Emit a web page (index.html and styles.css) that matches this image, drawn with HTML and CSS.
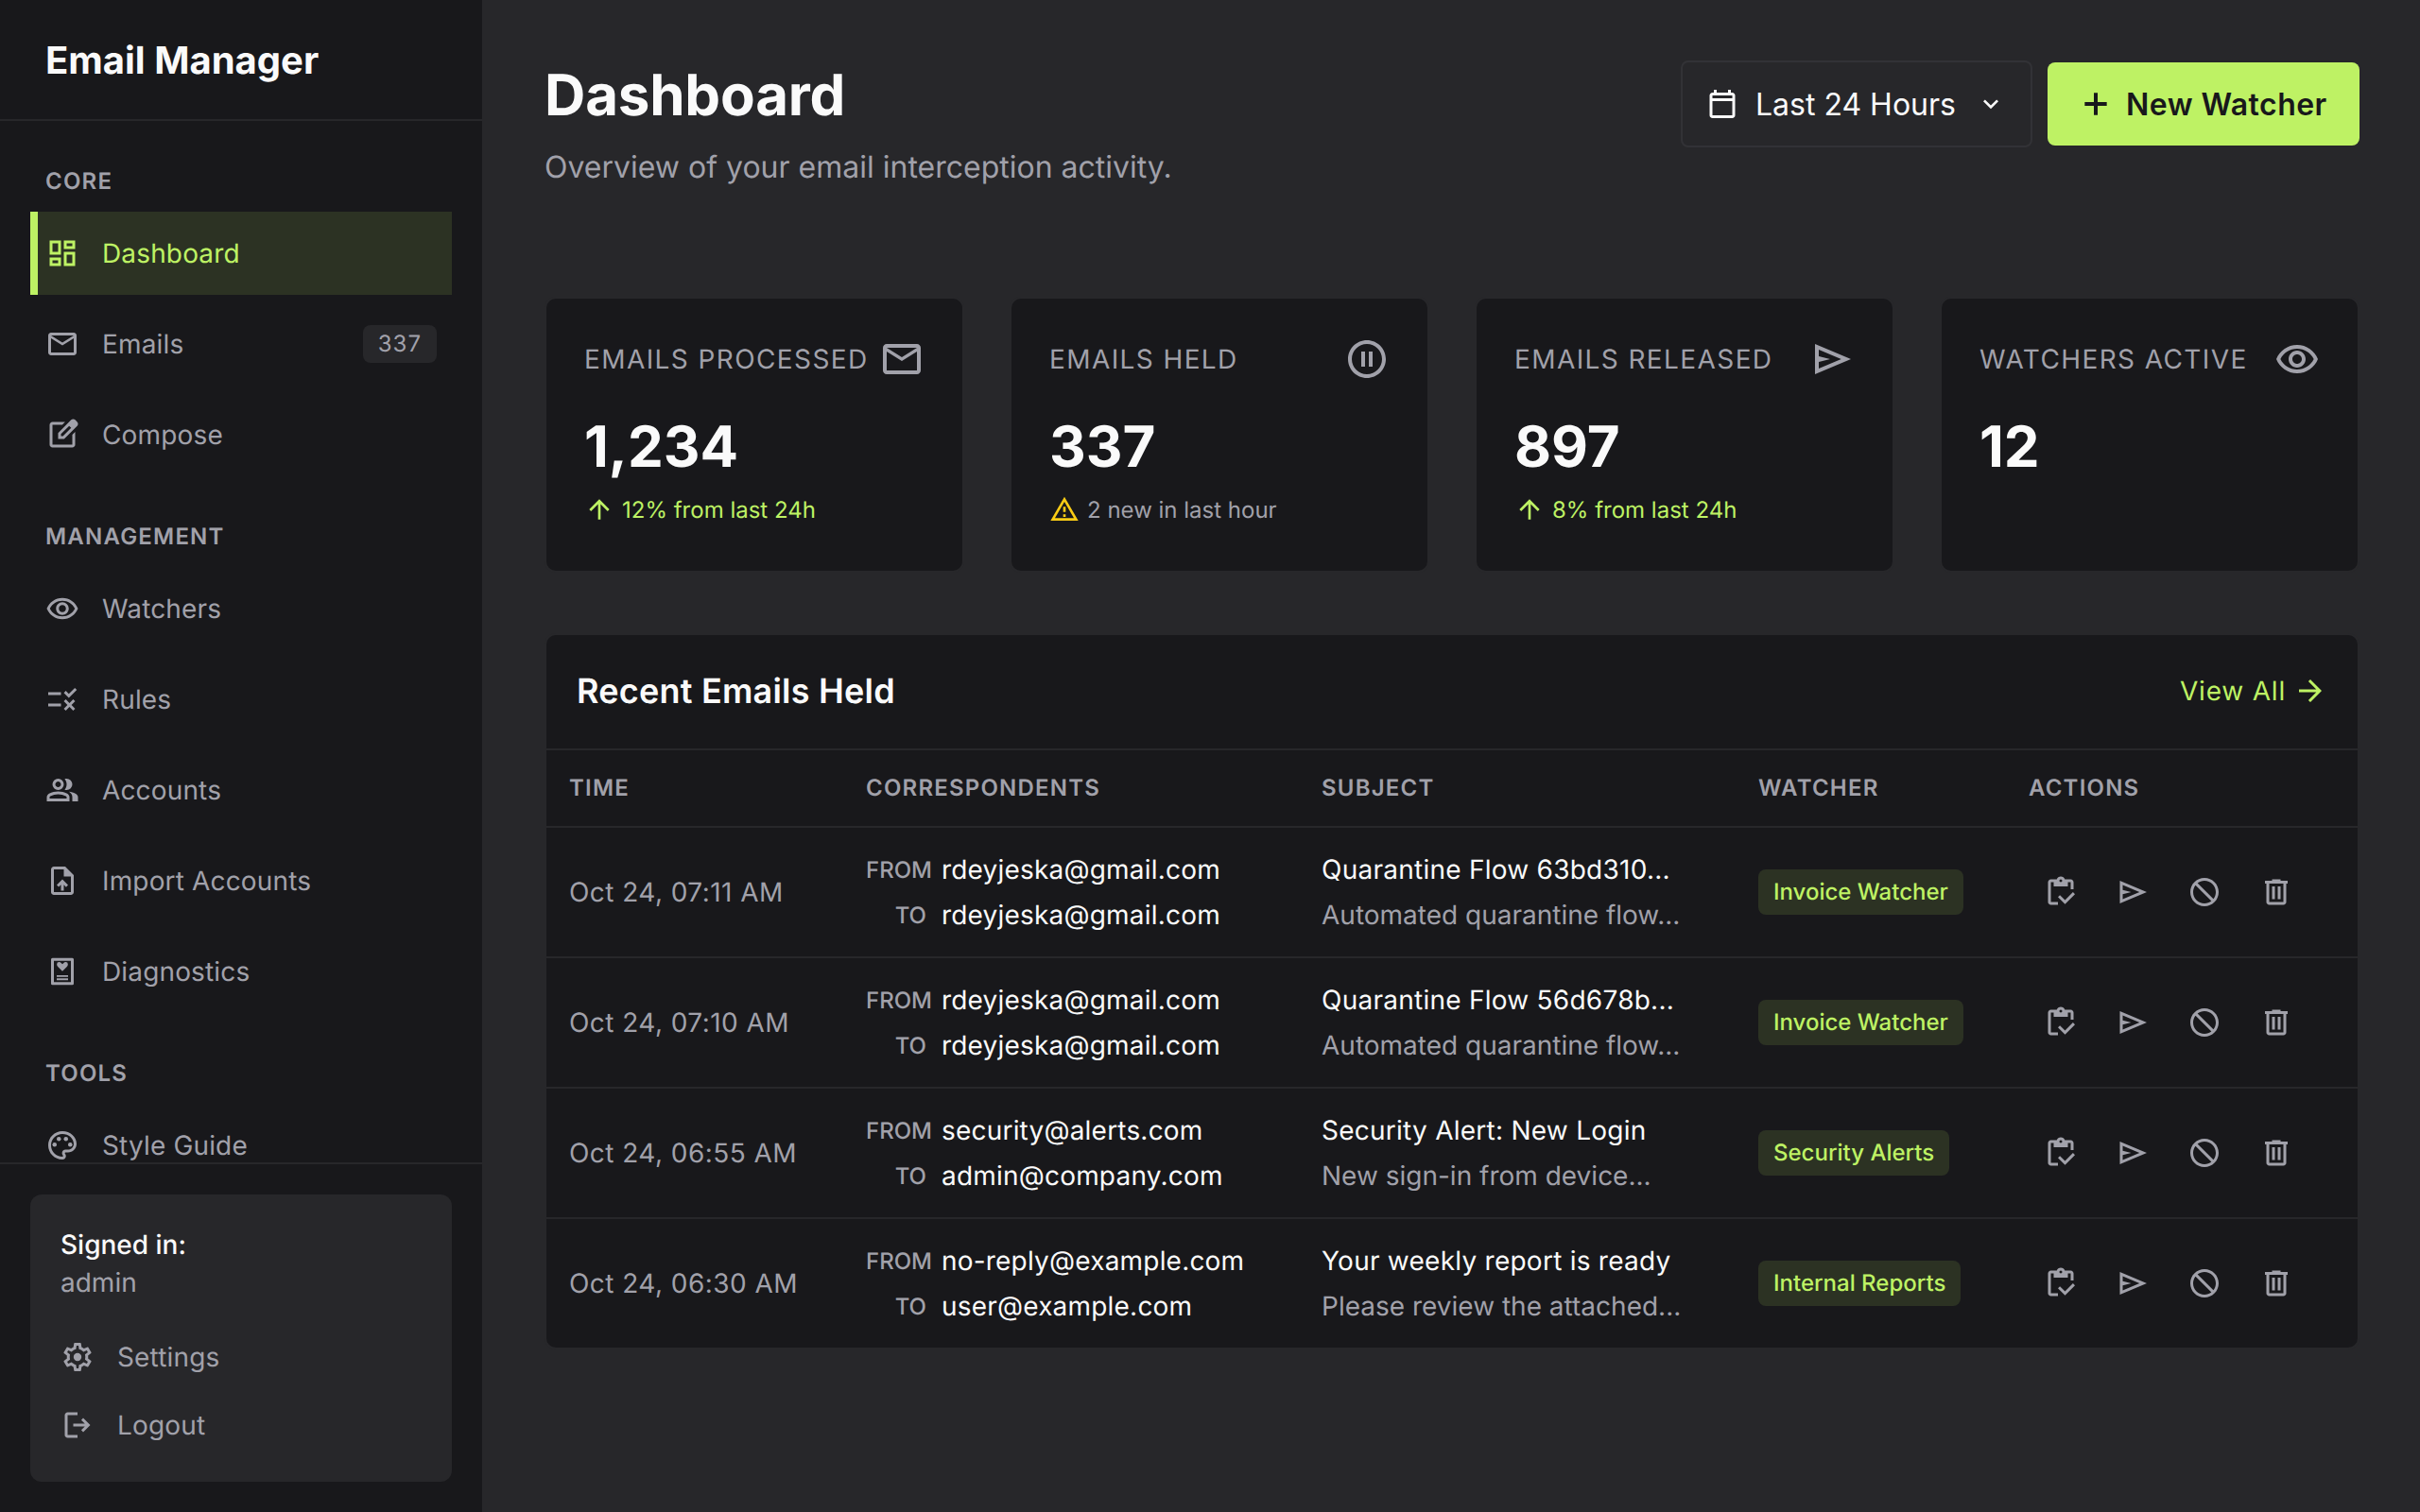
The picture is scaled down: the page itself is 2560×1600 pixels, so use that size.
FILE: index.html
```html
<!DOCTYPE html>
<html lang="en">
<head>
    <meta charset="UTF-8">
    <meta name="viewport" content="width=device-width, initial-scale=1.0">
    <link rel="stylesheet" href="styles.css">
    <title>Email Manager</title>
</head>
<body>
    <div class="app">
        <aside class="sidebar">
            <div class="brand">Email Manager</div>
            <nav class="nav">
                <div class="nav-label">CORE</div>
                <a class="nav-item active">
                    <svg class="icon" viewBox="0 0 24 24"><path d="M19 5v2h-4V5h4M9 5v6H5V5h4m10 8v6h-4v-6h4M9 17v2H5v-2h4M21 3h-8v6h8V3zM11 3H3v10h8V3zm10 8h-8v10h8V11zm-10 4H3v6h8v-6z"/></svg>
                    <span>Dashboard</span>
                </a>
                <a class="nav-item">
                    <svg class="icon" viewBox="0 0 24 24"><path d="M20 4H4c-1.1 0-1.99.9-1.99 2L2 18c0 1.1.9 2 2 2h16c1.1 0 2-.9 2-2V6c0-1.1-.9-2-2-2zm0 14H4V8l8 5 8-5v10zm-8-7L4 6h16l-8 5z"/></svg>
                    <span>Emails</span>
                    <span class="nav-badge">337</span>
                </a>
                <a class="nav-item">
                    <svg class="icon" viewBox="0 0 24 24"><path fill-rule="evenodd" d="M5 21q-.825 0-1.412-.587Q3 19.825 3 19V5q0-.825.588-1.413Q4.175 3 5 3h8.925l-2 2H5v14h14v-6.95l2-2V19q0 .825-.587 1.413Q19.825 21 19 21Zm4-6v-4.25l9.175-9.175q.3-.3.675-.45.375-.15.75-.15.4 0 .763.15.362.15.662.425L22.425 3q.275.3.425.662.15.363.15.738t-.137.737q-.138.363-.438.663L13.25 15Zm2-2h1.4l5.8-5.8-.7-.7-.725-.7L11 11.575Z"/></svg>
                    <span>Compose</span>
                </a>

                <div class="nav-label">MANAGEMENT</div>
                <a class="nav-item">
                    <svg class="icon" viewBox="0 0 24 24"><path d="M12 6.5c3.79 0 7.17 2.13 8.82 5.5-1.65 3.37-5.02 5.5-8.82 5.5S4.83 15.37 3.18 12C4.83 8.63 8.21 6.5 12 6.5m0-2C7 4.5 2.73 7.61 1 12c1.73 4.39 6 7.5 11 7.5s9.27-3.11 11-7.5c-1.73-4.39-6-7.5-11-7.5zm0 5c1.38 0 2.5 1.12 2.5 2.5s-1.12 2.5-2.5 2.5-2.5-1.12-2.5-2.5 1.12-2.5 2.5-2.5m0-2c-2.48 0-4.5 2.02-4.5 4.5s2.02 4.5 4.5 4.5 4.5-2.02 4.5-4.5-2.02-4.5-4.5-4.5z"/></svg>
                    <span>Watchers</span>
                </a>
                <a class="nav-item">
                    <svg class="icon" viewBox="0 0 24 24"><path d="M16.54 11L13 7.46l1.41-1.41 2.12 2.12 4.24-4.24 1.41 1.41L16.54 11zM11 7H2v2h9V7zm10 6.41L19.59 12 17 14.59 14.41 12 13 13.41 15.59 16 13 18.59 14.41 20 17 17.41 19.59 20 21 18.59 18.41 16 21 13.41zM11 15H2v2h9v-2z"/></svg>
                    <span>Rules</span>
                </a>
                <a class="nav-item">
                    <svg class="icon" viewBox="0 0 24 24"><path fill-rule="evenodd" d="M1 20v-2.8q0-.85.438-1.563.437-.712 1.162-1.087 1.55-.775 3.15-1.163Q7.35 13 9 13t3.25.387q1.6.388 3.15 1.163.725.375 1.162 1.087Q17 16.35 17 17.2V20Zm18 0v-3q0-1.1-.612-2.113-.613-1.012-1.738-1.737 1.275.15 2.4.512 1.125.363 2.1.888.9.5 1.375 1.112Q23 16.275 23 17v3ZM9 12q-1.65 0-2.825-1.175Q5 9.65 5 8q0-1.65 1.175-2.825Q7.35 4 9 4q1.65 0 2.825 1.175Q13 6.35 13 8q0 1.65-1.175 2.825Q10.65 12 9 12Zm10-4q0 1.65-1.175 2.825Q16.65 12 15 12q-.275 0-.7-.062-.425-.063-.7-.138.675-.8 1.037-1.775Q15 9.05 15 8q0-1.05-.363-2.025Q14.275 5 13.6 4.2q.35-.125.7-.162Q14.65 4 15 4q1.65 0 2.825 1.175Q19 6.35 19 8ZM3 18h12v-.8q0-.275-.137-.5-.138-.225-.363-.35-1.35-.675-2.725-1.012Q10.4 15 9 15t-2.775.338Q4.85 15.675 3.5 16.35q-.225.125-.362.35Q3 16.925 3 17.2Zm6-8q.825 0 1.413-.588Q11 8.825 11 8t-.587-1.412Q9.825 6 9 6q-.825 0-1.412.588Q7 7.175 7 8t.588 1.412Q8.175 10 9 10Z"/></svg>
                    <span>Accounts</span>
                </a>
                <a class="nav-item">
                    <svg class="icon" viewBox="0 0 24 24"><path fill-rule="evenodd" d="M6 22q-.825 0-1.412-.587Q4 20.825 4 20V4q0-.825.588-1.413Q5.175 2 6 2h8l6 6v12q0 .825-.587 1.413Q18.825 22 18 22Zm7-13V4H6v16h12V9ZM11 19h2v-4.175l1.6 1.6L16 15l-4-4-4 4 1.425 1.4L11 14.825Z"/></svg>
                    <span>Import Accounts</span>
                </a>
                <a class="nav-item">
                    <svg class="icon" viewBox="0 0 24 24"><path fill-rule="evenodd" d="M5 2.5h14q1 0 1 1v17q0 1-1 1H5q-1 0-1-1v-17q0-1 1-1Zm1 2v15h12v-15Z"/><path d="M12 11.8l-3-2.9q-.9-.9-.9-1.9 0-1.6 1.6-1.6.9 0 1.4.6l.9.8.9-.8q.5-.6 1.4-.6 1.6 0 1.6 1.6 0 1-.9 1.9ZM8 14.6h8v1.3H8Zm0 2.2h8v1.3H8Z"/></svg>
                    <span>Diagnostics</span>
                </a>

                <div class="nav-label">TOOLS</div>
                <a class="nav-item">
                    <svg class="icon" viewBox="0 0 24 24"><path d="M12 22C6.49 22 2 17.51 2 12S6.49 2 12 2s10 4.04 10 9c0 3.31-2.69 6-6 6h-1.77c-.28 0-.5.22-.5.5 0 .12.05.23.13.33.41.47.64 1.06.64 1.67 0 1.38-1.12 2.5-2.5 2.5zm0-18c-4.41 0-8 3.59-8 8s3.59 8 8 8c.28 0 .5-.22.5-.5 0-.16-.08-.28-.14-.35-.41-.46-.63-1.05-.63-1.65 0-1.38 1.12-2.5 2.5-2.5H16c2.21 0 4-1.79 4-4 0-3.86-3.59-7-8-7z"/><circle cx="6.5" cy="11.5" r="1.5"/><circle cx="9.5" cy="7.5" r="1.5"/><circle cx="14.5" cy="7.5" r="1.5"/><circle cx="17.5" cy="11.5" r="1.5"/></svg>
                    <span>Style Guide</span>
                </a>
            </nav>
            <div class="sidebar-footer">
                <div class="user-card">
                    <div class="user-title">Signed in:</div>
                    <div class="user-name">admin</div>
                    <div class="user-links">
                        <a class="user-link">
                            <svg class="icon" viewBox="0 0 24 24"><path d="M19.43 12.98c.04-.32.07-.64.07-.98 0-.34-.03-.66-.07-.98l2.11-1.65c.19-.15.24-.42.12-.64l-2-3.46c-.09-.16-.26-.25-.44-.25-.06 0-.12.01-.17.03l-2.49 1c-.52-.4-1.08-.73-1.69-.98l-.38-2.65C14.46 2.18 14.25 2 14 2h-4c-.25 0-.46.18-.49.42l-.38 2.65c-.61.25-1.17.59-1.69.98l-2.49-1c-.06-.02-.12-.03-.18-.03-.17 0-.34.09-.43.25l-2 3.46c-.13.22-.07.49.12.64l2.11 1.65c-.04.32-.07.65-.07.98 0 .33.03.66.07.98l-2.11 1.65c-.19.15-.24.42-.12.64l2 3.46c.09.16.26.25.44.25.06 0 .12-.01.17-.03l2.49-1c.52.4 1.08.73 1.69.98l.38 2.65c.03.24.24.42.49.42h4c.25 0 .46-.18.49-.42l.38-2.65c.61-.25 1.17-.59 1.69-.98l2.49 1c.06.02.12.03.18.03.17 0 .34-.09.43-.25l2-3.46c.12-.22.07-.49-.12-.64l-2.11-1.65zm-1.98-1.71c.04.31.05.52.05.73 0 .21-.02.43-.05.73l-.14 1.13.89.7 1.08.84-.7 1.21-1.27-.51-1.04-.42-.9.68c-.43.32-.84.56-1.25.73l-1.06.43-.16 1.13-.2 1.35h-1.4l-.19-1.35-.16-1.13-1.06-.43c-.43-.18-.83-.41-1.23-.71l-.91-.7-1.06.43-1.27.51-.7-1.21 1.08-.84.89-.7-.14-1.13c-.03-.31-.05-.54-.05-.74s.02-.43.05-.73l.14-1.13-.89-.7-1.08-.84.7-1.21 1.27.51 1.04.42.9-.68c.43-.32.84-.56 1.25-.73l1.06-.43.16-1.13.2-1.35h1.39l.19 1.35.16 1.13 1.06.43c.43.18.83.41 1.23.71l.91.7 1.06-.43 1.27-.51.7 1.21-1.07.85-.89.7.14 1.13z"/><circle cx="12" cy="12" r="2.8"/></svg>
                            <span>Settings</span>
                        </a>
                        <a class="user-link">
                            <svg class="icon" viewBox="0 0 24 24"><path d="M5 21c-.55 0-1.02-.2-1.41-.59C3.2 20.02 3 19.55 3 19V5c0-.55.2-1.02.59-1.41C3.98 3.2 4.45 3 5 3h7v2H5v14h7v2H5Zm11-4-1.375-1.45 2.55-2.55H9v-2h8.175l-2.55-2.55L16 7l5 5-5 5Z"/></svg>
                            <span>Logout</span>
                        </a>
                    </div>
                </div>
            </div>
        </aside>

        <main class="main">
            <header class="page-head">
                <div>
                    <h1 class="page-title">Dashboard</h1>
                    <p class="page-sub">Overview of your email interception activity.</p>
                </div>
                <div class="head-actions">
                    <button class="range-select">
                        <svg class="icon" viewBox="0 0 24 24"><path fill-rule="evenodd" d="M5 22q-.825 0-1.412-.587Q3 20.825 3 20V6q0-.825.588-1.412Q4.175 4 5 4h1V2h2v2h8V2h2v2h1q.825 0 1.413.588Q21 5.175 21 6v14q0 .825-.587 1.413Q19.825 22 19 22Zm0-2h14V10H5Zm0-12h14V6H5Z"/></svg>
                        <span>Last 24 Hours</span>
                        <svg class="icon chevron" viewBox="0 0 24 24"><path d="M16.59 8.59 12 13.17 7.41 8.59 6 10l6 6 6-6z"/></svg>
                    </button>
                    <button class="primary-btn">
                        <svg class="icon" viewBox="0 0 24 24"><path d="M19 13.2h-5.8V19h-2.4v-5.8H5v-2.4h5.8V5h2.4v5.8H19z"/></svg>
                        <span>New Watcher</span>
                    </button>
                </div>
            </header>

            <section class="stats">
                <div class="stat-card">
                    <div class="stat-head">
                        <span class="stat-label">EMAILS PROCESSED</span>
                        <svg class="icon" viewBox="0 0 24 24"><path d="M20 4H4c-1.1 0-1.99.9-1.99 2L2 18c0 1.1.9 2 2 2h16c1.1 0 2-.9 2-2V6c0-1.1-.9-2-2-2zm0 14H4V8l8 5 8-5v10zm-8-7L4 6h16l-8 5z"/></svg>
                    </div>
                    <div class="stat-value">1,234</div>
                    <div class="stat-note up">
                        <svg class="icon" viewBox="0 0 24 24"><path d="M4 12l1.41 1.41L11 7.83V20h2V7.83l5.58 5.59L20 12l-8-8-8 8z"/></svg>
                        <span>12% from last 24h</span>
                    </div>
                </div>
                <div class="stat-card">
                    <div class="stat-head">
                        <span class="stat-label">EMAILS HELD</span>
                        <svg class="icon" viewBox="0 0 24 24"><path d="M9 16h2V8H9v8zm3-14C6.48 2 2 6.48 2 12s4.48 10 10 10 10-4.48 10-10S17.52 2 12 2zm0 18c-4.41 0-8-3.59-8-8s3.59-8 8-8 8 3.59 8 8-3.59 8-8 8zm1-4h2V8h-2v8z"/></svg>
                    </div>
                    <div class="stat-value">337</div>
                    <div class="stat-note">
                        <svg class="icon warn" viewBox="0 0 24 24"><path d="M12 5.99 19.53 19H4.47L12 5.99M12 2 1 21h22L12 2zm1 14h-2v2h2v-2zm0-6h-2v4h2v-4z"/></svg>
                        <span>2 new in last hour</span>
                    </div>
                </div>
                <div class="stat-card">
                    <div class="stat-head">
                        <span class="stat-label">EMAILS RELEASED</span>
                        <svg class="icon" viewBox="0 0 24 24"><path fill-rule="evenodd" d="M3 20V4l19 8Zm2-3 11.85-5L5 7v3.5l6 1.5-6 1.5Z"/></svg>
                    </div>
                    <div class="stat-value">897</div>
                    <div class="stat-note up">
                        <svg class="icon" viewBox="0 0 24 24"><path d="M4 12l1.41 1.41L11 7.83V20h2V7.83l5.58 5.59L20 12l-8-8-8 8z"/></svg>
                        <span>8% from last 24h</span>
                    </div>
                </div>
                <div class="stat-card">
                    <div class="stat-head">
                        <span class="stat-label">WATCHERS ACTIVE</span>
                        <svg class="icon" viewBox="0 0 24 24"><path d="M12 6.5c3.79 0 7.17 2.13 8.82 5.5-1.65 3.37-5.02 5.5-8.82 5.5S4.83 15.37 3.18 12C4.83 8.63 8.21 6.5 12 6.5m0-2C7 4.5 2.73 7.61 1 12c1.73 4.39 6 7.5 11 7.5s9.27-3.11 11-7.5c-1.73-4.39-6-7.5-11-7.5zm0 5c1.38 0 2.5 1.12 2.5 2.5s-1.12 2.5-2.5 2.5-2.5-1.12-2.5-2.5 1.12-2.5 2.5-2.5m0-2c-2.48 0-4.5 2.02-4.5 4.5s2.02 4.5 4.5 4.5 4.5-2.02 4.5-4.5-2.02-4.5-4.5-4.5z"/></svg>
                    </div>
                    <div class="stat-value">12</div>
                </div>
            </section>

            <section class="panel">
                <div class="panel-head">
                    <h2 class="panel-title">Recent Emails Held</h2>
                    <a class="view-all">
                        <span>View All</span>
                        <svg class="icon" viewBox="0 0 24 24"><path d="M12 4l-1.41 1.41L16.17 11H4v2h12.17l-5.58 5.59L12 20l8-8z"/></svg>
                    </a>
                </div>
                <table class="held-table">
                    <colgroup>
                        <col class="col-time">
                        <col class="col-corr">
                        <col class="col-subject">
                        <col class="col-watcher">
                        <col class="col-actions">
                    </colgroup>
                    <thead>
                        <tr>
                            <th>TIME</th>
                            <th>CORRESPONDENTS</th>
                            <th>SUBJECT</th>
                            <th>WATCHER</th>
                            <th>ACTIONS</th>
                        </tr>
                    </thead>
                    <tbody id="rows"></tbody>
                </table>
            </section>
        </main>
    </div>

    <template id="row-actions">
        <div class="row-actions">
            <button class="icon-btn"><svg class="icon" viewBox="0 0 24 24"><path fill-rule="evenodd" d="M5 21q-.825 0-1.412-.587Q3 19.825 3 19V5q0-.825.588-1.413Q4.175 3 5 3h4.175q.275-.875 1.075-1.438Q11.05 1 12 1q1 0 1.788.562.787.563 1.062 1.438H19q.825 0 1.413.587Q21 4.175 21 5v5h-2V5h-2v3H7V5H5v14h5v2Zm10-.5-5-5 1.4-1.4 3.6 3.55 5.6-5.6 1.4 1.45ZM12 5q.425 0 .713-.288Q13 4.425 13 4t-.287-.713Q12.425 3 12 3t-.712.287Q11 3.575 11 4t.288.712Q11.575 5 12 5Z"/></svg></button>
            <button class="icon-btn"><svg class="icon" viewBox="0 0 24 24"><path fill-rule="evenodd" d="M3 20V4l19 8Zm2-3 11.85-5L5 7v3.5l6 1.5-6 1.5Z"/></svg></button>
            <button class="icon-btn"><svg class="icon" viewBox="0 0 24 24"><path d="M12 2C6.48 2 2 6.48 2 12s4.48 10 10 10 10-4.48 10-10S17.52 2 12 2zm0 18c-4.42 0-8-3.58-8-8 0-1.85.63-3.55 1.69-4.9L16.9 18.31C15.55 19.37 13.85 20 12 20zm6.31-3.1L7.1 5.69C8.45 4.63 10.15 4 12 4c4.42 0 8 3.58 8 8 0 1.85-.63 3.55-1.69 4.9z"/></svg></button>
            <button class="icon-btn"><svg class="icon" viewBox="0 0 24 24"><path fill-rule="evenodd" d="M7 21q-.825 0-1.412-.587Q5 19.825 5 19V6H4V4h5V3h6v1h5v2h-1v13q0 .825-.587 1.413Q17.825 21 17 21ZM17 6H7v13h10ZM9 17h2V8H9Zm4 0h2V8h-2Z"/></svg></button>
        </div>
    </template>

    <script src="rows.js"></script>
</body>
</html>
```

FILE: styles.css
```css
* {
    box-sizing: border-box;
}

body {
    margin: 0;
    background-color: #27272a;
    color: #fafafa;
    font-family: Inter, "Noto Sans", sans-serif;
    font-size: 28px;
    text-rendering: geometricPrecision;
}

h1, h2, p {
    margin: 0;
}

button {
    font-family: inherit;
    cursor: pointer;
}

.icon {
    display: block;
    flex: none;
    width: 36px;
    height: 36px;
    fill: currentColor;
}

.app {
    display: flex;
    height: 1600px;
    overflow: hidden;
}

/* sidebar */
.sidebar {
    display: flex;
    flex-direction: column;
    flex: none;
    width: 512px;
    height: 1600px;
    background-color: #18181b;
    border-right: 2px solid #27272a;
}

.brand {
    flex: none;
    height: 128px;
    padding: 0 48px;
    border-bottom: 2px solid #27272a;
    font-size: 40px;
    font-weight: 700;
    line-height: 128px;
}

.nav {
    flex: 1;
    min-height: 0;
    overflow: hidden;
    padding: 48px 32px 0;
}

.nav-label {
    height: 32px;
    margin: 0 0 16px 16px;
    color: #a1a1aa;
    font-size: 24px;
    font-weight: 600;
    letter-spacing: 1.2px;
    line-height: 32px;
}

.nav-item + .nav-label {
    margin-top: 48px;
}

.nav-item {
    display: flex;
    align-items: center;
    gap: 24px;
    height: 88px;
    margin-bottom: 8px;
    padding: 0 16px;
    color: #a1a1aa;
    letter-spacing: 0.15px;
}

.nav-item.active {
    padding-left: 8px;
    border-left: 8px solid #bef264;
    background-color: rgba(190, 242, 100, 0.12);
    color: #bef264;
}

.nav-badge {
    margin-left: auto;
    padding: 4px 16px;
    border-radius: 8px;
    background-color: #27272a;
    font-size: 24px;
    letter-spacing: 1px;
    line-height: 32px;
}

.sidebar-footer {
    flex: none;
    height: 370px;
    padding: 32px;
    border-top: 2px solid #27272a;
}

.user-card {
    height: 304px;
    padding: 32px;
    border-radius: 12px;
    background-color: #27272a;
}

.user-title {
    font-weight: 500;
    line-height: 42px;
}

.user-name {
    color: #a1a1aa;
    line-height: 38px;
}

.user-links {
    margin-top: 24px;
}

.user-link {
    display: flex;
    align-items: center;
    gap: 24px;
    height: 72px;
    color: #a1a1aa;
    letter-spacing: 0.15px;
}

/* main */
.main {
    flex: 1;
    min-width: 0;
    padding: 64px;
}

.page-head {
    display: flex;
    justify-content: space-between;
    height: 250px;
}

.page-title {
    margin-top: 1px;
    font-size: 60px;
    font-weight: 700;
    letter-spacing: -0.2px;
    line-height: 72px;
}

.page-sub {
    margin-top: 16px;
    color: #a1a1aa;
    font-size: 32px;
    line-height: 48px;
}

.head-actions {
    display: flex;
    align-items: center;
    align-self: flex-start;
    gap: 16px;
    height: 92px;
}

.range-select {
    display: flex;
    align-items: center;
    gap: 17px;
    width: 372px;
    height: 92px;
    padding: 0 26px 0 24px;
    border: 2px solid #323236;
    border-radius: 8px;
    background-color: transparent;
    color: #fafafa;
    font-size: 32px;
    white-space: nowrap;
}

.range-select .chevron {
    width: 32px;
    height: 32px;
    margin-left: auto;
}

.primary-btn {
    display: flex;
    align-items: center;
    gap: 12px;
    width: 330px;
    height: 88px;
    padding: 0 31px;
    border: 0;
    border-radius: 8px;
    background-color: #bef264;
    color: #18181b;
    font-size: 32px;
    font-weight: 600;
    letter-spacing: 0.45px;
    white-space: nowrap;
}

.primary-btn .icon {
    width: 40px;
    height: 40px;
}

.stats {
    display: grid;
    grid-template-columns: repeat(4, 1fr);
    gap: 48px;
    margin-bottom: 64px;
}

.stat-card {
    height: 292px;
    padding: 40px;
    border: 2px solid #27272a;
    border-radius: 12px;
    background-color: #18181b;
}

.stat-head {
    display: flex;
    align-items: center;
    justify-content: space-between;
    height: 48px;
    color: #a1a1aa;
}

.stat-head .icon {
    width: 48px;
    height: 48px;
}

.stat-label {
    font-size: 28px;
    letter-spacing: 1.4px;
}

.stat-value {
    margin-top: 33px;
    font-size: 60px;
    font-weight: 700;
    line-height: 72px;
}

.stat-note {
    display: flex;
    align-items: center;
    gap: 8px;
    height: 32px;
    margin-top: 14px;
    color: #a1a1aa;
    font-size: 24px;
}

.stat-note .icon {
    width: 32px;
    height: 32px;
}

.stat-note.up {
    color: #bef264;
}

.warn {
    color: #facc15;
}

/* recent emails */
.panel {
    height: 758px;
    border: 2px solid #27272a;
    border-radius: 12px;
    background-color: #18181b;
}

.panel-head {
    display: flex;
    align-items: center;
    justify-content: space-between;
    height: 122px;
    padding: 0 32px 2px;
    border-bottom: 2px solid #27272a;
}

.panel-title {
    font-size: 36px;
    font-weight: 600;
    letter-spacing: 0.22px;
}

.view-all {
    display: flex;
    align-items: center;
    gap: 8px;
    color: #bef264;
    letter-spacing: 0.8px;
}

.held-table {
    width: 100%;
    border-collapse: separate;
    border-spacing: 0;
    table-layout: fixed;
}

.col-time { width: 314px; }
.col-corr { width: 482px; }
.col-subject { width: 462px; }
.col-watcher { width: 286px; }

.held-table th {
    height: 82px;
    padding: 0 24px 2px;
    border-bottom: 2px solid #27272a;
    color: #a1a1aa;
    font-size: 24px;
    font-weight: 600;
    letter-spacing: 1.2px;
    text-align: left;
}

.held-table td {
    height: 138px;
    padding: 0 24px;
    border-bottom: 2px solid #27272a;
}

.held-table tr:last-child td {
    height: 136px;
    border-bottom: 0;
}

.time-cell {
    color: #a1a1aa;
    letter-spacing: 0.45px;
}

.party {
    display: flex;
    align-items: center;
    gap: 16px;
    height: 48px;
    letter-spacing: 0.2px;
    white-space: nowrap;
}

.party-label {
    flex: none;
    width: 64px;
    color: #a1a1aa;
    font-size: 24px;
    font-weight: 500;
    letter-spacing: 0;
    text-align: right;
}

.subject-line {
    height: 48px;
    letter-spacing: 0.25px;
    line-height: 48px;
    white-space: nowrap;
}

.subject-preview {
    color: #a1a1aa;
    letter-spacing: 0;
}

.watcher-badge {
    display: inline-block;
    padding: 8px 16px;
    border-radius: 8px;
    background-color: rgba(190, 242, 100, 0.12);
    color: #bef264;
    font-size: 24px;
    font-weight: 500;
    line-height: 32px;
}

.row-actions {
    display: flex;
    gap: 16px;
    margin-left: 4px;
}

.icon-btn {
    display: flex;
    justify-content: center;
    width: 60px;
    padding: 0;
    border: 0;
    background-color: transparent;
    color: #a1a1aa;
}
```

FILE: rows.js
```js
const heldEmails = [
    { time: 'Oct 24, 07:11 AM', from: 'rdeyjeska@gmail.com', to: 'rdeyjeska@gmail.com', subject: 'Quarantine Flow 63bd310...', preview: 'Automated quarantine flow...', watcher: 'Invoice Watcher' },
    { time: 'Oct 24, 07:10 AM', from: 'rdeyjeska@gmail.com', to: 'rdeyjeska@gmail.com', subject: 'Quarantine Flow 56d678b...', preview: 'Automated quarantine flow...', watcher: 'Invoice Watcher' },
    { time: 'Oct 24, 06:55 AM', from: 'security@alerts.com', to: 'admin@company.com', subject: 'Security Alert: New Login', preview: 'New sign-in from device...', watcher: 'Security Alerts' },
    { time: 'Oct 24, 06:30 AM', from: 'no-reply@example.com', to: 'user@example.com', subject: 'Your weekly report is ready', preview: 'Please review the attached...', watcher: 'Internal Reports' }
];

const rows = document.getElementById('rows');
const actionsTemplate = document.getElementById('row-actions');

for (const email of heldEmails) {
    const row = document.createElement('tr');
    row.innerHTML = `
        <td class="time-cell">${email.time}</td>
        <td>
            <div class="party"><span class="party-label">FROM</span><span>${email.from}</span></div>
            <div class="party"><span class="party-label">TO</span><span>${email.to}</span></div>
        </td>
        <td>
            <div class="subject-line">${email.subject}</div>
            <div class="subject-line subject-preview">${email.preview}</div>
        </td>
        <td><span class="watcher-badge">${email.watcher}</span></td>
        <td class="actions-cell"></td>
    `;
    row.querySelector('.actions-cell').appendChild(actionsTemplate.content.cloneNode(true));
    rows.appendChild(row);
}
```
